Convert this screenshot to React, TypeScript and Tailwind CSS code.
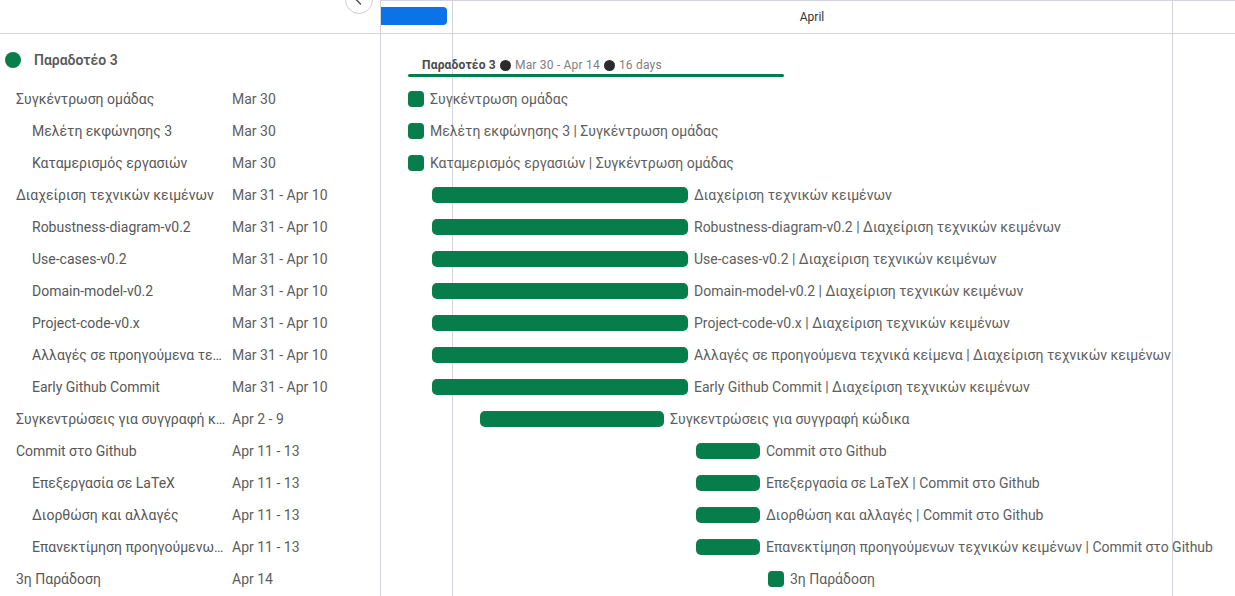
import React from "react";

type Row = { name: string; date: string; level: 0 | 1; start: number; days: number; label: string; milestone?: boolean };

const rows: Row[] = [
  { name: "Συγκέντρωση ομάδας", date: "Mar 30", level: 0, start: 0, days: 1, milestone: true, label: "Συγκέντρωση ομάδας" },
  { name: "Μελέτη εκφώνησης 3", date: "Mar 30", level: 1, start: 0, days: 1, milestone: true, label: "Μελέτη εκφώνησης 3 | Συγκέντρωση ομάδας" },
  { name: "Καταμερισμός εργασιών", date: "Mar 30", level: 1, start: 0, days: 1, milestone: true, label: "Καταμερισμός εργασιών | Συγκέντρωση ομάδας" },
  { name: "Διαχείριση τεχνικών κειμένων", date: "Mar 31 - Apr 10", level: 0, start: 1, days: 11, label: "Διαχείριση τεχνικών κειμένων" },
  { name: "Robustness-diagram-v0.2", date: "Mar 31 - Apr 10", level: 1, start: 1, days: 11, label: "Robustness-diagram-v0.2 | Διαχείριση τεχνικών κειμένων" },
  { name: "Use-cases-v0.2", date: "Mar 31 - Apr 10", level: 1, start: 1, days: 11, label: "Use-cases-v0.2 | Διαχείριση τεχνικών κειμένων" },
  { name: "Domain-model-v0.2", date: "Mar 31 - Apr 10", level: 1, start: 1, days: 11, label: "Domain-model-v0.2 | Διαχείριση τεχνικών κειμένων" },
  { name: "Project-code-v0.x", date: "Mar 31 - Apr 10", level: 1, start: 1, days: 11, label: "Project-code-v0.x | Διαχείριση τεχνικών κειμένων" },
  { name: "Αλλαγές σε προηγούμενα τεχνικά κείμενα", date: "Mar 31 - Apr 10", level: 1, start: 1, days: 11, label: "Αλλαγές σε προηγούμενα τεχνικά κείμενα | Διαχείριση τεχνικών κειμένων" },
  { name: "Early Github Commit", date: "Mar 31 - Apr 10", level: 1, start: 1, days: 11, label: "Early Github Commit | Διαχείριση τεχνικών κειμένων" },
  { name: "Συγκεντρώσεις για συγγραφή κώδικα", date: "Apr 2 - 9", level: 0, start: 3, days: 8, label: "Συγκεντρώσεις για συγγραφή κώδικα" },
  { name: "Commit στο Github", date: "Apr 11 - 13", level: 0, start: 12, days: 3, label: "Commit στο Github" },
  { name: "Επεξεργασία σε LaTeX", date: "Apr 11 - 13", level: 1, start: 12, days: 3, label: "Επεξεργασία σε LaTeX | Commit στο Github" },
  { name: "Διορθώση και αλλαγές", date: "Apr 11 - 13", level: 1, start: 12, days: 3, label: "Διορθώση και αλλαγές | Commit στο Github" },
  { name: "Επανεκτίμηση προηγούμενων τεχνικών κειμένων", date: "Apr 11 - 13", level: 1, start: 12, days: 3, label: "Επανεκτίμηση προηγούμενων τεχνικών κειμένων | Commit στο Github" },
  { name: "3η Παράδοση", date: "Apr 14", level: 0, start: 15, days: 1, milestone: true, label: "3η Παράδοση" },
];

const DAY = 24;
const ORIGIN = 27; // x of Mar 30 bar inside chart panel

export default function App() {
  return (
    <div className="w-[1235px] h-[596px] overflow-hidden flex bg-white font-['Roboto','Liberation_Sans',sans-serif] text-[14px]">
      {/* Left grid */}
      <div className="relative w-[381px] shrink-0 border-r border-[#d4d4de] flex flex-col">
        <div className="h-[34px] border-b border-[#d4d4de] shrink-0" />
        <div className="absolute left-[345px] top-[-14px] w-[28px] h-[28px] rounded-full border border-[#cfd0d8] bg-white flex items-center justify-center z-10">
          <svg width="12" height="12" viewBox="0 0 12 12" fill="none" stroke="#444" strokeWidth="1.3" strokeLinecap="round">
            <path d="M7.5 2 L3.5 6 L7.5 10" />
          </svg>
        </div>
        <div className="pt-[10px]">
          <div className="h-[32px] flex items-center pl-[5px] mb-[7px]">
            <span className="w-[16px] h-[16px] rounded-full bg-[#077d4b] shrink-0" />
            <span className="ml-[13px] font-semibold text-[#5a5a5a]">Παραδοτέο 3</span>
          </div>
          {rows.map((r, i) => (
            <div key={i} className="h-[32px] flex items-center text-[#585858]">
              <div className={r.level === 0 ? "w-[232px] pl-[16px] pr-[6px] shrink-0" : "w-[232px] pl-[32px] pr-[8px] shrink-0"}>
                <div className="truncate">{r.name}</div>
              </div>
              <div className="text-[#5e5e5e]">{r.date}</div>
            </div>
          ))}
        </div>
      </div>

      {/* Chart */}
      <div className="relative flex-1 flex flex-col">
        <div className="absolute left-[71px] top-0 bottom-0 w-px bg-[#d4d4de]" />
        <div className="absolute left-[791px] top-0 bottom-0 w-px bg-[#d4d4de]" />
        <div className="h-[34px] shrink-0 border-t border-b border-[#d4d4de] flex">
          <div className="w-[71px] shrink-0 pt-[6px]">
            <div className="w-[66px] h-[18px] bg-[#0b72e7] rounded-r-[4px]" />
          </div>
          <div className="w-[720px] shrink-0 flex items-center justify-center text-[12px] text-[#333]">April</div>
        </div>
        <div className="relative pt-[23px]">
          <div className="h-[16px] flex items-center text-[12px] leading-[16px]" style={{ marginLeft: ORIGIN + 14 }}>
            <span className="font-bold text-[#4a4a4a] tracking-[0.2px]">Παραδοτέο 3</span>
            <span className="mx-[4px] w-[11px] h-[11px] rounded-full bg-[#2b2b2b] inline-block" />
            <span className="text-[#808080] tracking-[0.2px]">Mar 30 - Apr 14</span>
            <span className="mx-[4px] w-[11px] h-[11px] rounded-full bg-[#2b2b2b] inline-block" />
            <span className="text-[#808080] tracking-[0.2px]">16 days</span>
          </div>
          <div className="h-[3px] mt-[1px] rounded-full bg-[#077d4b]" style={{ marginLeft: ORIGIN, width: 16 * DAY - 8 }} />
          <div className="h-[6px]" />
          {rows.map((r, i) => (
            <div key={i} className="h-[32px] flex items-center text-[#5e5e5e] whitespace-nowrap">
              <div
                className={r.milestone ? "h-[16px] rounded-[4px] bg-[#077d4b] shrink-0" : "h-[16px] rounded-[5px] bg-[#077d4b] shrink-0"}
                style={{ marginLeft: ORIGIN + r.start * DAY, width: r.milestone ? 16 : r.days * DAY - 8 }}
              />
              <span className="ml-[6px]">{r.label}</span>
            </div>
          ))}
        </div>
      </div>
    </div>
  );
}
